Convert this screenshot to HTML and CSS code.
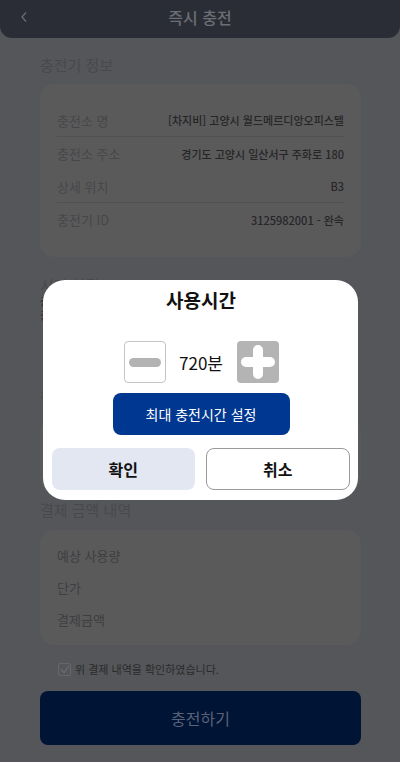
FILE: index.html
```html
<!DOCTYPE html>
<html lang="ko">
<head>
<meta charset="utf-8">
<link rel="stylesheet" href="styles.css">
</head>
<body>
<div class="page">
  <header class="topbar">
    <svg class="back" width="10" height="14" viewBox="0 0 10 14"><path d="M7 2.5 L3 7 L7 11.5" fill="none" stroke="#6b6e75" stroke-width="1.2"/></svg>
    <h1 class="title">즉시 충전</h1>
  </header>

  <main class="content">
    <h2 class="sec-title">충전기 정보</h2>
    <div class="card info">
      <div class="row line"><span class="lbl">충전소 명</span><span class="val">[차지비] 고양시 월드메르디앙오피스텔</span></div>
      <div class="row"><span class="lbl">충전소 주소</span><span class="val">경기도 고양시 일산서구 주화로 180</span></div>
      <div class="row line"><span class="lbl">상세 위치</span><span class="val">B3</span></div>
      <div class="row"><span class="lbl">충전기 ID</span><span class="val">3125982001 - 완속</span></div>
    </div>

    <section class="hidden-sec">
      <h2 class="sec-title">시간 설정</h2>
      <p class="desc">충전 시간 설정</p>
      <p class="desc">종료 안내</p>
    </section>

    <section class="hidden-sec2">
      <h2 class="sec-title">결제 수단</h2>
      <div class="card pay-card"></div>
    </section>

    <h2 class="sec-title">결제 금액 내역</h2>
    <div class="card amount">
      <div class="arow"><span class="lbl dark">예상 사용량</span></div>
      <div class="arow"><span class="lbl dark">단가</span></div>
      <div class="arow"><span class="lbl dark">결제금액</span></div>
    </div>

    <label class="agree">
      <span class="chk"><svg width="10" height="9" viewBox="0 0 10 9"><path d="M1 4.5 L4 7.5 L9 1.2" fill="none" stroke="#6a6c72" stroke-width="1.2"/></svg></span>
      <span class="agree-text">위 결제 내역을 확인하였습니다.</span>
    </label>

    <button class="charge">충전하기</button>
  </main>

  <div class="modal">
    <h3 class="m-title">사용시간</h3>
    <div class="stepper">
      <span class="step minus"><span class="bar"></span></span>
      <span class="minutes">720분</span>
      <span class="step plus"><span class="ph"></span><span class="pv"></span></span>
    </div>
    <button class="max-btn">최대 충전시간 설정</button>
    <div class="m-actions">
      <button class="ok">확인</button>
      <button class="cancel">취소</button>
    </div>
  </div>
</div>
</body>
</html>
```

FILE: styles.css
```css
* { box-sizing: border-box; margin: 0; padding: 0; }
html, body { width: 400px; height: 762px; overflow: hidden; }
body {
  background: #555659;
  font-family: "Noto Sans CJK KR", "Noto Sans", sans-serif;
}
.page { position: relative; width: 400px; height: 762px; }

.topbar {
  height: 38px;
  background: #2a2d36;
  border-radius: 0 0 12px 12px;
  display: flex;
  align-items: center;
  justify-content: center;
  position: relative;
}
.back { position: absolute; left: 19px; top: 10px; }
.title { font-size: 16px; font-weight: 500; color: #6b6e75; line-height: 20px; margin-top: -4px; }

.content { padding: 0 39px 0 40px; display: flex; flex-direction: column; }
.sec-title { font-size: 15px; font-weight: 400; color: #48494c; line-height: 20px; }
.content > .sec-title:first-child { margin-top: 17px; }

.card { background: #5a5a5b; border-radius: 14px; }
.info { margin-top: 9px; padding: 20px 17px 21px 17px; height: 173px; }
.row { height: 33px; display: flex; align-items: center; justify-content: space-between; }
.row.line { border-bottom: 1px solid #505052; }
.lbl { font-size: 13px; color: #474749; }
.lbl.dark { color: #3e3e40; }
.val { font-size: 11px; font-weight: 500; color: #262627; }

.hidden-sec { margin-top: 18px; height: 113px; }
.desc { font-size: 11px; line-height: 13px; color: #2e2e30; margin-bottom: 1px; }
.hidden-sec2 { height: 112px; }
.pay-card { margin-top: 10px; height: 74px; }

.amount { margin-top: 10px; padding: 9px 17px 10px; height: 115px; }
.arow { height: 32px; display: flex; align-items: center; }

.agree { display: flex; align-items: center; margin: 17px 0 0 18px; height: 14px; }
.chk {
  width: 13px; height: 13px; border: 1px solid #65676d; border-radius: 2px;
  display: flex; align-items: center; justify-content: center;
}
.agree-text { font-size: 11px; color: #2a2a2b; margin-left: 4px; }

.charge {
  margin-top: 15px;
  height: 54px;
  border: none;
  border-radius: 8px;
  background: #001435;
  color: #5a6277;
  font-family: inherit;
  font-size: 16px;
}

.modal {
  position: absolute;
  left: 43px; top: 280px;
  width: 315px; height: 220px;
  background: #fff;
  border-radius: 22px;
  padding: 0 8px 10px 9px;
  display: flex;
  flex-direction: column;
  align-items: center;
}
.m-title { font-size: 19px; font-weight: 700; color: #111; line-height: 24px; margin-top: 8px; }
.stepper { display: flex; align-items: center; margin-top: 29px; height: 42px; }
.step { width: 42px; height: 42px; border-radius: 4px; position: relative; display: block; }
.minus { border: 1px solid #c4c4c4; background: #fff; }
.minus .bar { position: absolute; left: 4px; top: 16px; width: 32px; height: 9px; border-radius: 5px; background: #b3b3b3; }
.plus { background: #b4b4b4; }
.plus .ph { position: absolute; left: 4px; top: 16px; width: 34px; height: 10px; border-radius: 5px; background: #fff; }
.plus .pv { position: absolute; left: 16px; top: 4px; width: 10px; height: 34px; border-radius: 5px; background: #fff; }
.minutes { font-size: 17px; color: #111; width: 71px; text-align: center; }
.max-btn {
  margin-top: 10px;
  width: 177px; height: 42px;
  border: none; border-radius: 8px;
  background: #003790;
  color: #fff;
  font-family: inherit; font-size: 14px;
}
.m-actions { margin-top: 13px; display: flex; gap: 11px; width: 100%; }
.m-actions button {
  flex: 1; height: 42px; border-radius: 8px;
  font-family: inherit; font-size: 16px; font-weight: 700; color: #111;
}
.ok { background: #e3e7f1; border: none; }
.cancel { background: #fff; border: 1px solid #9a9a9a; }
```
